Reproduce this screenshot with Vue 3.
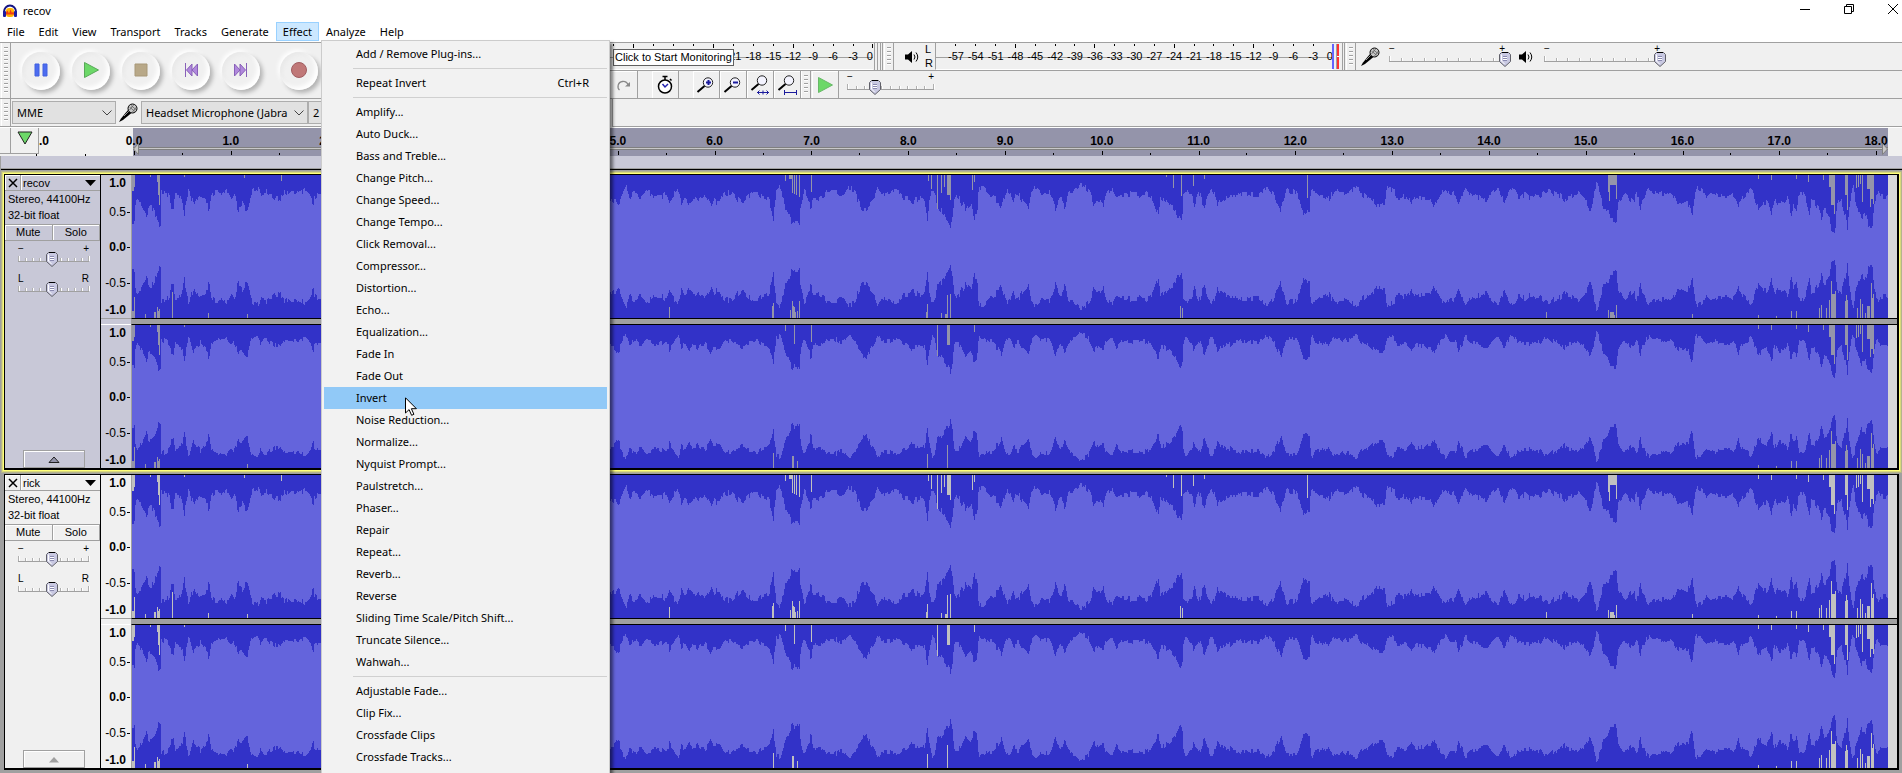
<script setup>
import { h } from 'vue'

const menus = ['File', 'Edit', 'View', 'Transport', 'Tracks', 'Generate', 'Effect', 'Analyze', 'Help']

const effectGroups = [
  [{ label: 'Add / Remove Plug-ins...' }],
  [{ label: 'Repeat Invert', key: 'Ctrl+R' }],
  [
    'Amplify...', 'Auto Duck...', 'Bass and Treble...', 'Change Pitch...', 'Change Speed...',
    'Change Tempo...', 'Click Removal...', 'Compressor...', 'Distortion...', 'Echo...',
    'Equalization...', 'Fade In', 'Fade Out', 'Invert', 'Noise Reduction...', 'Normalize...',
    'Nyquist Prompt...', 'Paulstretch...', 'Phaser...', 'Repair', 'Repeat...', 'Reverb...',
    'Reverse', 'Sliding Time Scale/Pitch Shift...', 'Truncate Silence...', 'Wahwah...'
  ].map((label) => ({ label })),
  ['Adjustable Fade...', 'Clip Fix...', 'Crossfade Clips', 'Crossfade Tracks...'].map((label) => ({ label }))
]

const seconds = Array.from({ length: 18 }, (_, i) => `${i}.0`)
const scale = (from) => {
  const out = []
  for (let db = from; db <= 0; db += 3) out.push(db)
  return out
}
const recordScale = scale(-39)
const playScale = scale(-57)

const channelLabels = [
  { text: '1.0', major: true },
  { text: '0.5', tick: true },
  { text: '0.0', major: true, tick: true },
  { text: '-0.5', tick: true },
  { text: '-1.0', major: true }
]

/* Slider with end marks, tick scale and a shield-shaped thumb. */
const Slider = (props) =>
  h('label', { class: 'sl' }, [
    h('span', { class: 'sl-ends', 'aria-hidden': 'true' }, [h('b', props.low), h('b', props.high)]),
    h('span', { class: 'sl-ticks' }, Array.from({ length: 11 }, (_, i) => h('i', { key: i }))),
    h('svg', { class: 'sl-thumb', style: { left: props.value + '%' }, width: 12, height: 15, viewBox: '0 0 12 15' }, [
      h('path', { d: 'M2.5.5h7l2 2v7l-5.500 5-5.500-5v-7z', fill: '#c9c9e2', stroke: '#606068' }),
      h('path', { d: 'M2.500 2.500v6.500l3 3', fill: 'none', stroke: '#fff' }),
      h('path', { d: 'M3 .5h6', stroke: '#000' }),
      h('path', { d: 'M4 4.500h4M4 6.500h4M4 8.500h4', stroke: '#8a8ab0' }),
      h('path', { d: 'M4 5.500h4M4 7.500h4', stroke: '#fff' })
    ]),
    h('input', { type: 'range', min: 0, max: 100, value: props.value, 'aria-label': props.label })
  ])
Slider.props = ['label', 'low', 'high', 'value']

/* Peak outline: [column, distance of the peak from the channel's top edge x 3, plus 29]. */
const W = 1756
const H = 143
const seg = (x0, k, pts) => pts.split(' ').map((p) => {
  const [x, y] = p.split(',').map(Number)
  return [x0 + x / k - 132, (y - 29) / 3]
})
const outline = [
  ...seg(0, 3, '396,170 403,175 406,100 412,98 420,110 430,128 440,155 445,120 452,125 460,138 470,168 475,180 480,175 483,80 495,85 505,90 512,130 520,130 525,90 535,95 545,115 553,155 560,90 565,78 570,95 580,120 590,105 600,90 608,100 618,110 625,155 630,115 637,85 645,80 660,85 680,78 692,95 700,90 710,115 712,148 717,120 725,115 740,148 745,120 752,85 760,70 770,68 780,90 795,80 810,90 820,95 840,105 850,80 860,85 880,80 900,85 915,75 930,95 938,120 945,95 960,88'),
  ...seg(600, 2.412, '24,100 36,110 40,128 46,120 52,85 62,64 70,95 85,78 95,100 105,92 115,80 130,95 150,92 158,85 167,118 175,90 188,70 195,110 204,95 212,112 225,98 235,108 250,92 266,122 275,108 288,112 300,85 315,82 328,100 342,112 358,90 375,85 390,92 405,105 412,130 417,168 422,110 424,75 433,68 440,95 445,130 455,148 462,178 470,165 480,178 484,115 492,80 500,100 508,155 513,95 525,100 540,95 548,76 565,78 580,92 600,68 612,78 620,105 630,130 643,138 655,108 662,95 670,65 680,90 700,84 715,78 730,95 750,112 765,100 780,100 788,168 794,110 800,72 806,80 812,130 822,135 835,165 845,188 850,150 855,95 862,92 870,112 882,135 893,115 900,160 908,150 914,70 925,72 935,90 945,85 955,108 968,128 975,95 985,75 997,115 1005,85 1020,115 1033,135 1040,85 1050,68 1065,85 1080,80 1098,135 1110,100 1120,130 1130,88 1145,75 1160,60 1175,72 1190,125 1200,100 1213,122 1220,85 1232,72 1245,105 1260,88 1280,85 1300,88 1312,85 1325,95 1335,118 1345,152 1352,100 1365,110 1380,125 1395,160 1403,178 1408,75 1415,70 1425,95 1432,120 1445,85 1456,142 1465,100 1474,72 1488,118 1500,100 1520,95 1540,88 1565,85'),
  ...seg(1250, 2.405, '0,88 20,88 40,72 55,85 65,115 73,138 80,110 88,75 98,78 110,82 120,115 128,145 142,135 148,65 155,88 175,95 190,98 205,75 220,88 235,82 253,68 265,85 285,100 300,118 322,120 330,68 340,72 357,110 370,92 388,118 400,98 420,102 435,105 441,132 450,100 460,85 467,68 480,95 490,85 500,115 510,98 518,70 530,90 545,95 560,105 570,108 580,85 595,75 610,112 620,85 630,68 643,95 660,90 675,100 690,85 700,92 710,75 725,82 740,88 755,108 770,92 785,85 800,100 817,135 824,115 833,55 840,90 848,125 860,140 865,165 880,172 886,105 900,90 915,105 922,110 930,85 937,150 943,105 957,72 970,80 985,82 998,90 1010,85 1025,110 1040,115 1050,110 1062,155 1068,100 1072,68 1080,72 1095,92 1110,85 1130,90 1150,95 1165,90 1173,128 1182,100 1195,90 1203,75 1213,105 1222,138 1232,112 1242,110 1254,155 1260,100 1270,120 1283,115 1292,95 1300,155 1306,125 1314,135 1320,80 1330,82 1338,110 1343,155 1350,105 1362,120 1374,170 1380,135 1390,150 1398,195 1406,202 1412,120 1418,100 1428,140 1436,190 1442,110 1450,65 1455,110 1462,140 1470,165 1476,140 1485,175 1495,195 1502,110 1507,80 1515,95 1532,98')
]

const noise = (n) => {
  const s = Math.sin(n * 127.1 + 311.7) * 43758.5453
  return s - Math.floor(s)
}

function depths(lower) {
  const out = []
  let k = 0
  for (let x = 0; x < W; x++) {
    while (k < outline.length - 2 && outline[k + 1][0] <= x) k++
    const [xa, ya] = outline[k]
    const [xb, yb] = outline[k + 1]
    const t = Math.max(0, Math.min(1, (x - xa) / (xb - xa || 1)))
    const toDeep = yb > ya ? t : 1 - t
    let d = Math.min(ya, yb) + Math.abs(yb - ya) * toDeep ** 1.6
    const cell = Math.floor(x / 1.5)
    if (lower) d = d * 0.92 - 1 + (noise(cell + 907) - 0.5) * 5
    else d += (noise(cell) - 0.5) * 6
    out.push(Math.max(6, Math.round(d)))
  }
  return out
}

function bodyPath(lower) {
  const ds = depths(lower)
  let p = `M0 ${ds[0]}`
  ds.forEach((d, x) => { p += `V${d}H${x + 1}` })
  for (let x = W - 1; x >= 0; x--) p += `V${H - ds[x]}H${x}`
  return p + 'Z'
}

/* Silent-background slivers above and below the wave: [x, length, width]. */
const bars = (x0, k, list) => list.map(([x, l, w = 1]) => [Math.round(x0 + x / k - 132), l, w])
const topGaps = [
  ...bars(0, 3, [[397, 16, 2], [403, 12], [451, 2], [470, 7, 2], [475, 20], [478, 30], [553, 2], [733, 3], [844, 6]]),
  ...bars(600, 2.412, [[447, 6], [457, 4, 3], [462, 18], [468, 19], [473, 20], [479, 22], [508, 17], [790, 6], [799, 14], [812, 49], [822, 18], [830, 12], [836, 20, 3], [845, 25], [898, 15], [903, 7], [1366, 2], [1383, 13], [1402, 21], [1431, 11], [1458, 4]]),
  ...bars(1250, 2.405, [[136, 23], [862, 17], [864, 26], [867, 10, 6], [881, 24], [1222, 4], [1254, 5], [1312, 4], [1343, 7], [1377, 5], [1393, 12, 2], [1398, 30, 3], [1405, 39], [1431, 20, 2], [1436, 35], [1458, 13], [1463, 12], [1468, 9], [1471, 27], [1484, 14, 3], [1491, 32], [1493, 24, 2], [1498, 29]])
]
const bottomGaps = [
  ...bars(0, 3, [[397, 7, 2], [403, 21], [436, 4], [463, 6, 2], [472, 11], [475, 7], [478, 9], [517, 26], [625, 5], [740, 4]]),
  ...bars(600, 2.412, [[167, 11], [415, 12], [417, 15], [459, 8], [462, 17], [464, 12, 2], [468, 11], [471, 6], [476, 7], [479, 17], [786, 6], [789, 14], [822, 5], [831, 4, 2], [837, 23], [843, 17], [845, 24], [1398, 12], [1403, 10]]),
  ...bars(1250, 2.405, [[713, 6], [861, 8], [866, 6, 4], [876, 3], [881, 13], [1062, 4], [1222, 3], [1266, 2], [1300, 7], [1313, 7], [1369, 10], [1374, 13], [1386, 10], [1393, 18], [1398, 37], [1400, 24, 3], [1407, 27], [1430, 17], [1433, 23], [1436, 18], [1459, 10], [1468, 19], [1471, 14], [1480, 5], [1484, 12, 3], [1493, 35], [1495, 20], [1498, 24]])
]
/* The second channel has fewer silent slivers than the first. */
const keep = (lower, x, i) => !lower || x > 1620 || x < 30 || (x < 1000 && i % 3 === 0)
const gapPath = (lower) =>
  topGaps.filter(([x], i) => keep(lower, x, i)).map(([x, l, w]) => `M${x} 0h${w}v${l}h-${w}z`).join('') +
  bottomGaps.filter(([x], i) => keep(lower, x, i)).map(([x, l, w]) => `M${x} ${H}h${w}v-${l}h-${w}z`).join('')

const channels = [
  { body: bodyPath(false), gaps: gapPath(false) },
  { body: bodyPath(true), gaps: gapPath(true) }
]

const tracks = [
  { name: 'recov', selected: true },
  { name: 'rick', selected: false }
]

const zooms = [
  { name: 'Zoom In', sign: 'M12.500 4v5M10 6.500h5', under: '', box: '0 -2 20 21' },
  { name: 'Zoom Out', sign: 'M10 6.500h5', under: '', box: '0 -2 20 21' },
  { name: 'Fit Selection', sign: '', under: 'M7 18.500h12M9.500 16.500l-2 2 2 2M16.500 16.500l2 2-2 2M13 16.500v4', box: '0 0 20 21' },
  { name: 'Fit Project', sign: '', under: 'M7.500 16v5M19.500 16v5M7.500 18.500h12', box: '0 0 20 21' }
]
</script>

<template>
  <div class="app">
    <header class="title">
      <svg width="16" height="16" viewBox="0 0 16 16" aria-hidden="true">
        <path d="M2 9a6 6.500 0 0 1 12 0" fill="none" stroke="#141482" stroke-width="2" />
        <rect x="4" y="5" width="8" height="9" rx="3" fill="#ffb400" />
        <path d="M4 9.500l1.500-2 1.500 3 1.500-4 1.500 3.500 1-1.500 1 1.500v1.500H4z" fill="#f03c14" />
        <rect x="1" y="8" width="3" height="6" rx="1" fill="#1c1ca0" />
        <rect x="12" y="8" width="3" height="6" rx="1" fill="#1c1ca0" />
      </svg>
      <h1>recov</h1>
      <div class="winctl">
        <button aria-label="Minimize"><svg width="12" height="12" viewBox="0 0 12 12"><path d="M1 6.500h10" /></svg></button>
        <button aria-label="Restore"><svg width="12" height="12" viewBox="0 0 12 12"><path d="M1.500 3.500h7v7h-7zM3.500 3V1.500h7v7H9" /></svg></button>
        <button aria-label="Close"><svg width="12" height="12" viewBox="0 0 12 12"><path d="M1 1l10 10M11 1L1 11" /></svg></button>
      </div>
    </header>

    <nav class="menubar">
      <button v-for="m in menus" :key="m" :class="{ open: m === 'Effect' }">{{ m }}</button>
    </nav>

    <section class="bars">
      <div class="bars-left">
        <div class="bar transport">
          <span class="grip"></span>
          <button class="round" aria-label="Pause"><svg viewBox="0 0 16 16"><path d="M2 2h4v12H2zM10 2h4v12h-4z" fill="#4c6cf0" stroke="#4060e0" /></svg></button>
          <button class="round" aria-label="Play"><svg viewBox="0 0 16 16"><path d="M1.500.5l14 7.500-14 7.500z" fill="#6cd868" stroke="#58a858" /></svg></button>
          <button class="round" aria-label="Stop"><svg viewBox="0 0 16 16"><path d="M2 2h12v12H2z" fill="#b8a888" stroke="#a89878" /></svg></button>
          <button class="round" aria-label="Skip to Start"><svg viewBox="0 0 16 16"><path d="M2.500 1v14M9 2L3.500 8 9 14zM14.500 2L9 8l5.500 6z" fill="#b088dc" stroke="#8860b8" /></svg></button>
          <button class="round" aria-label="Skip to End"><svg viewBox="0 0 16 16"><path d="M13.500 1v14M7 2l5.500 6L7 14zM1.500 2L7 8l-5.500 6z" fill="#b088dc" stroke="#8860b8" /></svg></button>
          <button class="round record" aria-label="Record"><svg viewBox="0 0 16 16"><circle cx="8" cy="8" r="7.500" fill="#c07878" stroke="#a05c60" /></svg></button>
        </div>
        <div class="bar device">
          <span class="grip"></span>
          <span class="combo host">
            <select aria-label="Audio host"><option>MME</option></select>
            <svg width="10" height="6" viewBox="0 0 10 6"><path d="M.5.5L5 5 9.500.5" /></svg>
          </span>
          <svg class="mic" width="20" height="20" viewBox="0 0 20 20" aria-hidden="true">
            <path d="M1 19l2-3.500L10 7l3.500 3L5 17z" fill="#000" />
            <path d="M6 13l5-5" stroke="#999" />
            <circle cx="14.500" cy="5.500" r="4.500" fill="#c8c8c8" stroke="#000" />
            <path d="M11.500 4l5.500 4.500M13 2.500l5 4M11.500 7l4.500-5.500M14 9.500L18.500 4" stroke="#555" stroke-width=".7" />
          </svg>
          <span class="combo input">
            <select aria-label="Recording device"><option>Headset Microphone (Jabra Link)</option></select>
            <svg width="10" height="6" viewBox="0 0 10 6"><path d="M.5.5L5 5 9.500.5" /></svg>
          </span>
          <span class="combo chans">
            <select aria-label="Recording channels"><option>2 (Stereo) Recording Channels</option></select>
          </span>
        </div>
      </div>

      <div class="bars-right">
        <div class="row">
          <div class="meter rec">
            <span v-for="d in recordScale" :key="d" :class="{ tall: d % 12 === 0, last: d === 0 }">{{ d > -24 ? d : '' }}</span>
          </div>
          <span class="meter-end"></span>
          <span class="edge"></span>
          <span class="grip"></span>
          <svg class="speaker" width="14" height="14" viewBox="0 0 14 14" aria-hidden="true">
            <path d="M0 4.500h3L7 1v12L3 9.500H0z" fill="#000" />
            <path d="M9 4.500q2 2.500 0 5M11 2.500q3.500 4.500 0 9" fill="none" stroke="#000" />
          </svg>
          <span class="lr"><span>L</span><span>R</span></span>
          <div class="meter play">
            <span v-for="d in playScale" :key="d" :class="{ tall: d % 12 === 0, last: d === 0 }">{{ d }}</span>
          </div>
          <span class="peak"></span>
          <span class="clip"></span>
          <span class="edge"></span>
          <span class="grip"></span>
          <svg class="mic rowmic" width="20" height="20" viewBox="0 0 20 20" aria-hidden="true">
            <path d="M1 19l2-3.500L10 7l3.500 3L5 17z" fill="#000" />
            <path d="M6 13l5-5" stroke="#999" />
            <circle cx="14.500" cy="5.500" r="4.500" fill="#c8c8c8" stroke="#000" />
            <path d="M11.500 4l5.500 4.500M13 2.500l5 4M11.500 7l4.500-5.500M14 9.500L18.500 4" stroke="#555" stroke-width=".7" />
          </svg>
          <div class="volume"><Slider label="Recording volume" low="−" high="+" :value="100" /></div>
          <svg class="speaker two" width="14" height="14" viewBox="0 0 14 14" aria-hidden="true">
            <path d="M0 4.500h3L7 1v12L3 9.500H0z" fill="#000" />
            <path d="M9 4.500q2 2.500 0 5M11 2.500q3.500 4.500 0 9" fill="none" stroke="#000" />
          </svg>
          <div class="volume"><Slider label="Playback volume" low="−" high="+" :value="100" /></div>
        </div>

        <div class="row">
          <button class="tool redo" aria-label="Redo">
            <svg width="16" height="12" viewBox="0 0 16 12"><path d="M3.500 11C1 9 1.500 3 6.500 2.500c3-.3 5 1.500 6 4" fill="none" stroke="#888" stroke-width="1.300" /><path d="M9 7.500h5V3z" fill="#888" /></svg>
          </button>
          <button class="tool timer" aria-label="Timer">
            <svg width="18" height="20" viewBox="0 0 18 20"><circle cx="9" cy="11.500" r="6.500" fill="#fff" stroke="#000" stroke-width="1.500" /><path d="M6.500 1.500h5M9 2v3M14 4l1.500 1.500" fill="none" stroke="#000" stroke-width="1.500" /><path d="M6.500 9L9 12l3-3" fill="none" stroke="#2222b0" stroke-width="1.500" /></svg>
          </button>
          <button v-for="z in zooms" :key="z.name" class="tool" :aria-label="z.name">
            <svg width="20" height="21" :viewBox="z.box">
              <path d="M1.500 16L8.500 10" stroke="#000" stroke-width="2" />
              <circle cx="12" cy="6.500" r="4.700" fill="#f4f4ff" stroke="#222" />
              <path :d="z.sign" stroke="#1a1a9c" stroke-width="2" />
              <path :d="z.under" fill="none" stroke="#1a1a9c" />
            </svg>
          </button>
          <span class="grip"></span>
          <button class="tool speedplay" aria-label="Play at speed">
            <svg width="16" height="16" viewBox="0 0 16 16"><path d="M1.500.5l14 7.500-14 7.500z" fill="#6cd868" stroke="#68b868" /></svg>
          </button>
          <div class="speed"><Slider label="Playback speed" low="−" high="+" :value="32" /></div>
        </div>

        <div class="row output"></div>
      </div>
      <div class="tip" role="tooltip">Click to Start Monitoring</div>
    </section>

    <section class="timeline">
      <div class="before">
        <span class="stub"></span>
        <button class="pin" aria-label="Pin play head"><svg width="16" height="14" viewBox="0 0 16 14"><path d="M1 1h14L8 13z" fill="#6cd868" stroke="#222" /></svg></button>
        <span class="neg">.0</span>
      </div>
      <div class="range">
        <div class="sec" v-for="s in seconds" :key="s"><span>{{ s }}</span></div>
        <div class="sec tail"><span>18.0</span></div>
        <div class="region">
          <svg width="6" height="12" viewBox="0 0 6 12"><path d="M5.500.5v11L.5 6z" fill="#c8c8c8" stroke="#808080" /></svg>
          <svg width="6" height="12" viewBox="0 0 6 12"><path d="M.5.5v11l5-5.500z" fill="#c8c8c8" stroke="#808080" /></svg>
        </div>
      </div>
      <div class="after"></div>
    </section>
    <div class="scrub"></div>

    <main class="tracks">
      <article v-for="t in tracks" :key="t.name" class="track" :class="{ selected: t.selected }">
        <div class="panel">
          <div class="head">
            <button class="close" aria-label="Close track"><svg width="10" height="10" viewBox="0 0 10 10"><path d="M1 1l8 8M9 1L1 9" stroke="#000" stroke-width="1.500" /></svg></button>
            <button class="name">{{ t.name }}<svg width="11" height="6" viewBox="0 0 11 6"><path d="M0 0h11L5.500 6z" /></svg></button>
          </div>
          <div class="info"><p>Stereo, 44100Hz</p><p>32-bit float</p></div>
          <div class="ms"><button>Mute</button><button>Solo</button></div>
          <div class="knob"><Slider label="Gain" low="−" high="+" :value="48" /></div>
          <div class="knob"><Slider label="Pan" low="L" high="R" :value="48" /></div>
          <button class="fold" aria-label="Collapse track"><svg width="12" height="7" viewBox="0 0 12 7"><path d="M1 6.500h10L6 1z" /></svg></button>
        </div>
        <div class="lanes">
          <div v-for="(c, i) in channels" :key="i" class="lane">
            <div class="vruler">
              <span v-for="l in channelLabels" :key="l.text" :class="{ major: l.major, tick: l.tick }">{{ l.text }}</span>
            </div>
            <div class="wave">
              <svg :viewBox="`0 0 ${W} ${H}`" preserveAspectRatio="none" shape-rendering="crispEdges" aria-hidden="true">
                <rect :width="W" :height="H" fill="#3232c8" />
                <path :d="c.gaps" class="gaps" />
                <path :d="c.body" fill="#6464dc" />
              </svg>
            </div>
          </div>
        </div>
      </article>
    </main>

    <div class="popup" role="menu" aria-label="Effect">
      <ul v-for="(g, gi) in effectGroups" :key="gi">
        <li v-for="it in g" :key="it.label">
          <button role="menuitem" :class="{ hot: it.label === 'Invert' }"><span>{{ it.label }}</span><kbd v-if="it.key">{{ it.key }}</kbd></button>
        </li>
      </ul>
    </div>
    <svg class="cursor" width="13" height="20" viewBox="0 0 13 20" aria-hidden="true">
      <path d="M.5.8v15.200l3.600-3.400 2.500 5.700 2.300-1-2.500-5.600h5z" fill="#fff" stroke="#000" />
    </svg>
  </div>
</template>

<style>
body { background: #a0a0a0; }
.sl { position: relative; display: block; height: 22px; font: 10px/8px "Liberation Sans", Arial, sans-serif; }
.sl-ends { display: flex; justify-content: space-between; height: 9px; }
.sl-ends b { font-weight: 400; }
.sl-ticks { display: flex; justify-content: space-between; align-items: flex-end; height: 7px; border-bottom: 1px solid #a0a0a0; }
.sl-ticks i { width: 1px; height: 3px; background: #b0b0b0; box-shadow: 1px 0 #fff; }
.sl-ticks i:first-child, .sl-ticks i:last-child { height: 5px; }
.sl-thumb { position: absolute; top: 7px; margin-left: -6px; }
.sl input { position: absolute; inset: 0; width: 100%; margin: 0; opacity: 0; }
</style>

<style scoped>
.app { position: relative; min-height: 773px; overflow: hidden; background: #a0a0a0; color: #000; font: 11px/14px "Noto Sans", "Open Sans", sans-serif; }
button { margin: 0; padding: 0; border: 0; background: none; color: inherit; font: inherit; }
h1, p, ul { margin: 0; padding: 0; font: inherit; list-style: none; }

.title { display: flex; align-items: center; height: 22px; padding-left: 2px; background: #fff; }
.title h1 { flex: 1; margin-left: 5px; }
.winctl { display: flex; gap: 32px; padding-right: 3px; }
.winctl button { display: flex; width: 12px; }
.winctl path { fill: none; stroke: #000; }
.winctl svg { margin-bottom: 4px; }

.menubar { display: flex; height: 20px; background: #fff; }
.menubar button { height: 19px; padding: 0 6px; border: 1px solid transparent; }
.menubar .open { background: #cce8ff; border-color: #99d1ff; }

.bars { position: relative; display: flex; background: #f0f0f0; border-top: 1px solid #a0a0a0; }
.bars-left { width: 604px; flex: none; }
.bars-right { flex: 1; }
.bar { display: flex; align-items: center; padding-left: 1px; border-bottom: 1px solid #a0a0a0; }
.transport { height: 55px; }
.device { height: 27px; }
.grip { box-sizing: border-box; flex: none; align-self: stretch; width: 10px; border-right: 1px solid #a0a0a0; border-left: 1px solid #fff; background: repeating-linear-gradient(#a0a0a0 0 1px, #fff 1px 2px, transparent 2px 4px) 2px 4px / 4px calc(100% - 8px) no-repeat; }
.round { display: flex; align-items: center; justify-content: center; width: 38px; height: 38px; margin-left: 12px; border-radius: 50%; background: #f0f0f0; box-shadow: 3px 3px 4px #b4b4b4, -2px -2px 4px #fff, inset -3px -3px 4px #fff, inset 2px 2px 4px #e8e8e8; }
.round:nth-of-type(1) { margin-left: 11px; }
.record { margin-left: 20px; }
.round svg { width: 16px; height: 16px; margin-bottom: 1px; }
.combo { position: relative; height: 23px; }
.combo select { appearance: none; box-sizing: border-box; width: 100%; height: 23px; padding: 0 18px 0 4px; border: 1px solid #adadad; border-radius: 0; background: #e1e1e1; color: #000; font: 11px/14px "Noto Sans", sans-serif; text-overflow: clip; }
.combo svg { position: absolute; right: 4px; top: 9px; fill: none; stroke: #444; }
.host { width: 104px; margin-left: 1px; }
.input { width: 167px; }
.chans { width: 180px; }
.mic { flex: none; margin: 0 3px 0 2px; }

.row { display: flex; align-items: center; height: 27px; border-bottom: 1px solid #a0a0a0; }
.meter { display: flex; align-self: stretch; font: 11px/14px "Liberation Sans", Arial, sans-serif; background: linear-gradient(#a0a0a0, #a0a0a0) 0 14px / 100% 1px no-repeat; border-bottom: 1px solid #fff; }
.meter span { flex: 1 1 0; min-width: 0; text-align: center; padding-top: 6px; background: linear-gradient(#000, #000) 50% 1px / 1px 2px no-repeat; }
.meter .tall { background-size: 1px 4px; }
.meter .last { display: flex; flex: .5 1 0; justify-content: flex-end; background-position: 100% 1px; }
.rec { width: 269px; }
.meter-end { align-self: stretch; width: 2px; margin: 0 1px; border: solid #a0a0a0; border-width: 0 1px; }
.edge { align-self: stretch; width: 1px; margin: 0 1px; border-left: 1px solid #a0a0a0; border-right: 1px solid #a0a0a0; }
.speaker { margin: 0 6px 0 11px; }
.lr { display: flex; flex-direction: column; width: 10px; margin-bottom: 2px; font: 11px/14px "Liberation Sans", Arial, sans-serif; }
.play { width: 398px; padding-left: 10px; border-left: 1px solid #a0a0a0; box-sizing: border-box; }
.peak { width: 2px; height: 25px; background: #6464ff; margin-left: -1px; }
.clip { width: 2px; height: 25px; margin: 0 2px; border-left: 1px solid #a0a0a0; background: linear-gradient(#ff3232 12px, #fff 12px 13px, #ff3232 13px); }
.rowmic { margin: 0 9px 0 4px; }
.volume { width: 116px; height: 23px; }
.two { margin: 0 11px 0 14px; }

.tool { box-sizing: border-box; flex: none; display: flex; align-items: center; justify-content: center; width: 27px; height: 27px; border: solid #a0a0a0; border-width: 0 1px 0 0; box-shadow: inset 1px 1px #fff; }
.redo { margin: 0 14px 0 7px; }
.timer { margin-right: 14px; }
.row .grip + .tool { margin-left: 1px; }
.speed { width: 87px; height: 23px; margin-left: 8px; }
.output { margin-left: 8px; border-left: 1px solid #a0a0a0; }
.tip { position: absolute; left: 613px; top: 6px; padding: 0 1px; border: 1px solid #606060; background: #fff; font: 11px/15px "Liberation Sans", Arial, sans-serif; }

.timeline { display: flex; height: 28px; border-top: 1px solid #fff; background: #f0f0f0; font: bold 12px/14px "Liberation Sans", Arial, sans-serif; }
.before { display: flex; align-items: flex-start; width: 133px; flex: none; background: linear-gradient(#000, #000) 36px 100% / 1px 2px no-repeat, linear-gradient(#000, #000) 85px 100% / 1px 2px no-repeat; }
.stub { width: 10px; height: 25px; border: 1px solid #a0a0a0; border-width: 0 1px 1px 0; }
.pin { box-sizing: border-box; display: flex; justify-content: center; width: 28px; height: 26px; padding-top: 3px; border: solid #a0a0a0; border-width: 0 1px 1px 0; background: #f0f0f0; }
.neg { padding-top: 6px; }
.range { position: relative; flex: 1; display: flex; padding-left: 1px; background: #9494aa; }
.sec { flex: 1; padding-top: 6px; background: linear-gradient(#000, #000) 0 23px / 1px 4px no-repeat, linear-gradient(#000, #000) 50% 25px / 1px 2px no-repeat; }
.sec span { position: relative; display: block; width: 40px; margin-left: -20px; text-align: center; }
.tail { flex: none; width: 12px; background-size: 1px 4px, 0 0; }
.region { position: absolute; left: 0; right: 0; top: 19px; display: flex; justify-content: space-between; align-items: center; height: 1px; border: solid #808080; border-width: 1px 0; background: #c8c8c8; }
.region svg { flex: none; }
.after { width: 14px; }
.scrub { height: 12px; margin-left: 1px; background: #c8c8d7; border-bottom: 1px solid #a0a0a0; box-shadow: 0 1px #000; }

.tracks { display: flex; flex-direction: column; gap: 4px; padding: 5px 3px 3px 4px; }
.track { display: flex; border: solid #000; border-width: 1px 2px 2px 1px; background: #f0f0f0; }
.selected { background: #c8c8d7; box-shadow: 0 0 0 1px #ffff78, 0 0 0 2px #d8d87c, 0 0 0 3px #b4b48c; }
.panel { display: flex; flex-direction: column; flex: none; width: 95px; border-right: 1px solid #000; font: 11px/16px "Liberation Sans", Arial, sans-serif; }
.head { display: flex; height: 15px; border-bottom: 1px solid #a0a0a0; box-shadow: inset 1px 1px #fff; }
.close { display: flex; align-items: center; justify-content: center; width: 16px; border-right: 1px solid #a0a0a0; }
.name { flex: 1; display: flex; align-items: center; justify-content: space-between; padding: 0 4px 0 1px; border-left: 1px solid #fff; line-height: 14px; }
.info { height: 33px; padding-left: 3px; border-bottom: 1px solid #a0a0a0; }
.ms { display: flex; height: 15px; border-bottom: 1px solid #a0a0a0; }
.ms button { flex: 1; line-height: 15px; border-right: 1px solid #a0a0a0; box-shadow: inset 1px 1px #fff; }
.knob { width: 71px; margin: 4px 0 4px 13px; }
.fold { width: 62px; height: 18px; margin: auto 0 0 18px; display: flex; align-items: center; justify-content: center; border: 1px solid #a0a0a0; box-sizing: border-box; box-shadow: inset 1px 1px #fff; }
.fold path { fill: #a0a0a0; }
.selected .fold path { fill: #9494aa; stroke: #222; }

.lanes { flex: 1; min-width: 0; }
.lane { display: flex; }
.lane + .lane .vruler { margin-top: 5px; border-top: 1px solid #fff; }
.lane + .lane .wave { border-top: 1px solid #000; box-shadow: 0 -5px #a0a0a0; margin-top: 5px; }
.lane:first-child .vruler { border-bottom: 1px solid #a0a0a0; }
.lane:first-child .wave { border-bottom: 1px solid #000; }
.vruler { display: grid; grid-template-rows: 15px 43px 27px 45px 9px; align-items: center; flex: none; width: 30px; height: 142px; padding-top: 1px; font: 12px/9px "Liberation Sans", Arial, sans-serif; text-align: right; }
.vruler span { padding-right: 5px; }
.vruler .major { font-weight: 700; }
.vruler .tick { background: linear-gradient(#000, #000) 100% 50% / 3px 1px no-repeat; margin-right: 1px; padding-right: 4px; }
.wave { flex: 1; min-width: 0; border-left: 1px solid #a0a0a0; padding-right: 9px; background: #d8d8d8; }
.wave svg { display: block; width: 100%; height: 143px; }
.gaps { fill: #c0c0c0; }
.selected .gaps { fill: #9494aa; }

.popup { position: absolute; left: 321px; top: 40px; bottom: 0; box-sizing: border-box; width: 289px; padding: 2px; border: 1px solid #ccc; border-bottom: 0; background: #f2f2f2; box-shadow: 3px 3px 3px rgba(0, 0, 0, .5); }
.popup ul + ul { padding-top: 7px; background: linear-gradient(#d0d0d0, #d0d0d0) 29px 3px / calc(100% - 29px) 1px no-repeat; }
.popup button { display: flex; align-items: center; justify-content: space-between; width: 100%; height: 22px; padding: 0 18px 0 32px; text-align: left; }
.popup kbd { font: inherit; }
.popup .hot { background: #91c9f7; }
.cursor { position: absolute; left: 405px; top: 397px; }
</style>
